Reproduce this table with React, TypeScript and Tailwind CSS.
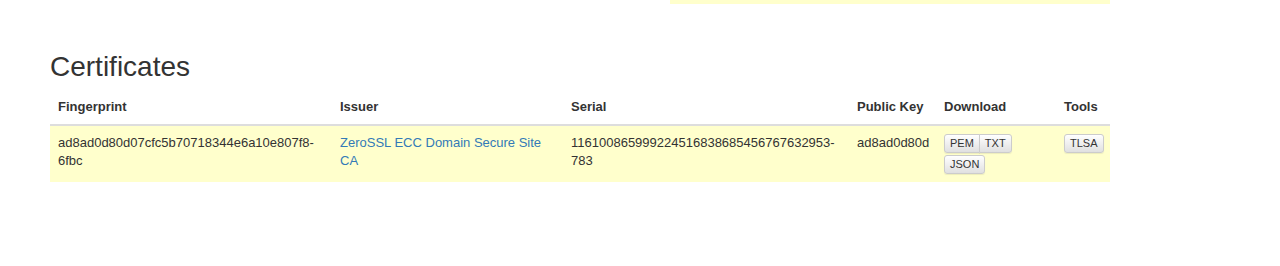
const btn =
  "inline-block border border-[#ccc] bg-gradient-to-b from-white to-[#e0e0e0] px-[5px] py-[1px] text-[11px] leading-[15px] text-[#333] shadow-[inset_0_1px_0_rgba(255,255,255,0.15),0_1px_1px_rgba(0,0,0,0.075)]";

export default function App() {
  return (
    <div className="h-[266px] w-[1280px] overflow-hidden bg-white font-['Liberation_Sans',Arial,sans-serif] text-[13px] leading-[18px] text-[#333]">
      {/* tail of the previous table */}
      <div className="ml-[670px] h-[4px] w-[440px] bg-[#ffffcc]" />

      <section className="px-[50px] pt-[47px]">
        <h2 className="text-[28px] leading-[31px] font-normal">Certificates</h2>

        <table className="mt-[8px] w-[1060px] table-fixed border-collapse text-left">
          <colgroup>
            <col className="w-[282px]" />
            <col className="w-[231px]" />
            <col className="w-[286px]" />
            <col className="w-[87px]" />
            <col className="w-[120px]" />
            <col className="w-[54px]" />
          </colgroup>
          <thead>
            <tr className="border-b-2 border-[#ddd]">
              <th className="p-[8px] font-bold">Fingerprint</th>
              <th className="p-[8px] font-bold">Issuer</th>
              <th className="p-[8px] font-bold">Serial</th>
              <th className="p-[8px] font-bold">Public Key</th>
              <th className="p-[8px] font-bold">Download</th>
              <th className="p-[8px] font-bold">Tools</th>
            </tr>
          </thead>
          <tbody>
            <tr className="bg-[#ffffcc] align-top">
              <td className="p-[8px]">ad8ad0d80d07cfc5b70718344e6a10e807f8-6fbc</td>
              <td className="p-[8px]">
                <a href="#" className="text-[#337ab7]">ZeroSSL ECC Domain Secure Site CA</a>
              </td>
              <td className="p-[8px]">116100865999224516838685456767632953-783</td>
              <td className="p-[8px]">ad8ad0d80d</td>
              <td className="p-[8px]">
                <div className="flex">
                  <span className={`${btn} rounded-l-[3px]`}>PEM</span>
                  <span className={`${btn} -ml-px rounded-r-[3px]`}>TXT</span>
                </div>
                <div className="mt-[2px]">
                  <span className={`${btn} rounded-[3px]`}>JSON</span>
                </div>
              </td>
              <td className="p-[8px]">
                <span className={`${btn} rounded-[3px]`}>TLSA</span>
              </td>
            </tr>
          </tbody>
        </table>
      </section>
    </div>
  );
}
